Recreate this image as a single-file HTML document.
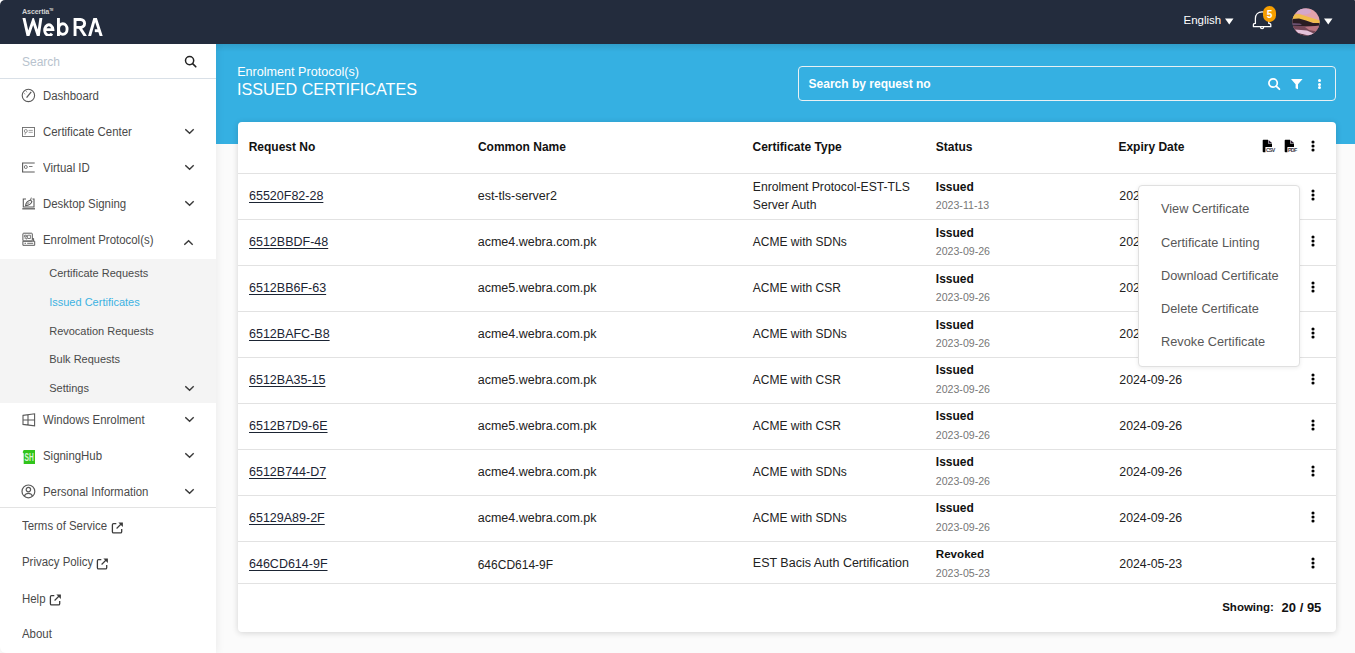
<!DOCTYPE html>
<html><head><meta charset="utf-8">
<style>
*{box-sizing:border-box;margin:0;padding:0}
html,body{width:1355px;height:653px;overflow:hidden;background:#fbfbfb;font-family:"Liberation Sans", sans-serif;color:#222}
.abs{position:absolute}
#hdr{position:absolute;left:0;top:0;width:1355px;height:44px;background:#232c3d;z-index:5;border-top-left-radius:5px;border-top-right-radius:1px}
#side{position:absolute;left:0;top:44px;width:216px;height:609px;background:#fff;box-shadow:1px 0 8px rgba(0,0,0,0.07);border-bottom-left-radius:6px}
#sidec{position:absolute;left:0;top:0;width:216px;height:653px;z-index:3}
#banner{position:absolute;left:216px;top:44px;width:1139px;height:100px;background:linear-gradient(rgba(0,0,0,0.1),rgba(0,0,0,0) 8px),#35b0e2}
#card{position:absolute;left:238px;top:122px;width:1098px;height:510px;background:#fff;border-radius:4px;box-shadow:0 1px 6px rgba(0,0,0,0.16)}
#main{position:absolute;left:0;top:0;width:1355px;height:653px}
.t{position:absolute;white-space:nowrap;line-height:1}
</style></head><body>
<div class="abs" style="left:0;top:0;width:10px;height:10px;background:#fff"></div>
<div id="banner"></div>
<div id="main">
<div class="t" style="left:237.2px;top:65.59px;font-size:12.6px;font-weight:400;color:#fff;">Enrolment Protocol(s)</div>
<div class="t" style="left:236.6px;top:80.93px;font-size:17px;font-weight:400;color:#fff;transform:scaleX(0.951);transform-origin:0 0">ISSUED CERTIFICATES</div>
<div class="abs" style="left:798px;top:66px;width:538px;height:35px;border:1px solid #e9f1f4;border-radius:4px"></div>
<div class="t" style="left:808.6px;top:78.28px;font-size:12px;font-weight:700;color:#fff;">Search by request no</div>
<svg class="abs" style="left:1267px;top:77px" width="15" height="14" viewBox="0 0 15 14"><circle cx="6.1" cy="6" r="4.2" fill="none" stroke="#fff" stroke-width="1.7"/><path d="M9.2 9.1L12.4 12.2" stroke="#fff" stroke-width="1.8" stroke-linecap="round"/></svg>
<svg class="abs" style="left:1290px;top:78px" width="14" height="12" viewBox="0 0 14 12"><path d="M1 1H12.6L8 6.3V11.3L5.6 10.2V6.3Z" fill="#fff"/></svg>
<div class="abs" style="left:1317.6px;top:79.0px;width:3px;height:3px;border-radius:50%;background:#fff"></div>
<div class="abs" style="left:1317.6px;top:82.5px;width:3px;height:3px;border-radius:50%;background:#fff"></div>
<div class="abs" style="left:1317.6px;top:85.8px;width:3px;height:3px;border-radius:50%;background:#fff"></div>

<div id="card"></div>
<div class="t" style="left:248.7px;top:140.58px;font-size:12px;font-weight:700;color:#111;">Request No</div>
<div class="t" style="left:477.9px;top:140.58px;font-size:12px;font-weight:700;color:#111;">Common Name</div>
<div class="t" style="left:752.5px;top:140.58px;font-size:12px;font-weight:700;color:#111;">Certificate Type</div>
<div class="t" style="left:935.8px;top:140.58px;font-size:12px;font-weight:700;color:#111;">Status</div>
<div class="t" style="left:1118.4px;top:140.58px;font-size:12px;font-weight:700;color:#111;">Expiry Date</div>
<svg class="abs" style="left:1262px;top:139px" width="16" height="15" viewBox="0 0 16 15"><path d="M0.7 1.5Q0.7 0.8 1.4 0.8H6V4.4H10V8H3.4V13.2H1.4Q0.7 13.2 0.7 12.5Z" fill="#000"/><path d="M6.5 1L10 4H6.5Z" fill="#2a1a30"/><text x="3.9" y="13.3" font-family="Liberation Sans" font-size="5.3" font-weight="bold" fill="#3a3a4a" textLength="9.3">CSV</text></svg>
<svg class="abs" style="left:1284px;top:139px" width="16" height="15" viewBox="0 0 16 15"><path d="M0.7 1.5Q0.7 0.8 1.4 0.8H6V4.4H10V8H3.4V13.2H1.4Q0.7 13.2 0.7 12.5Z" fill="#000"/><path d="M6.5 1L10 4H6.5Z" fill="#2a1a30"/><text x="3.9" y="13.3" font-family="Liberation Sans" font-size="5.3" font-weight="bold" fill="#3a3a4a" textLength="9.3">PDF</text></svg>
<svg class="abs" style="left:1308.6px;top:139.3px" width="8" height="14" viewBox="0 0 8 14"><circle cx="4" cy="3" r="1.55" fill="#000"/><circle cx="4" cy="7" r="1.55" fill="#000"/><circle cx="4" cy="11" r="1.55" fill="#000"/></svg>
<div class="abs" style="left:238px;top:173px;width:1098px;height:1px;background:#e2e2e2"></div>
<div class="t" style="left:249.0px;top:189.57px;font-size:12.5px;font-weight:400;color:#1b2433;text-decoration:underline;text-underline-offset:1.5px">65520F82-28</div>
<div class="t" style="left:477.7px;top:190.38px;font-size:12.5px;font-weight:400;color:#222;">est-tls-server2</div>
<div class="t" style="left:752.8px;top:181.42px;font-size:12.2px;font-weight:400;color:#222;">Enrolment Protocol-EST-TLS</div>
<div class="t" style="left:752.8px;top:199.12px;font-size:12.2px;font-weight:400;color:#222;">Server Auth</div>
<div class="t" style="left:935.8px;top:180.68px;font-size:12px;font-weight:700;color:#111;">Issued</div>
<div class="t" style="left:935.8px;top:199.91px;font-size:10.6px;font-weight:400;color:#777;">2023-11-13</div>
<div class="t" style="left:1119.3px;top:190.14px;font-size:12.3px;font-weight:400;color:#222;">2024-11-13</div>
<svg class="abs" style="left:1309px;top:187.9px" width="8" height="14" viewBox="0 0 8 14"><circle cx="4" cy="3" r="1.55" fill="#000"/><circle cx="4" cy="7" r="1.55" fill="#000"/><circle cx="4" cy="11" r="1.55" fill="#000"/></svg>
<div class="abs" style="left:238px;top:219px;width:1098px;height:1px;background:#e2e2e2"></div>
<div class="t" style="left:249.0px;top:235.57px;font-size:12.5px;font-weight:400;color:#1b2433;text-decoration:underline;text-underline-offset:1.5px">6512BBDF-48</div>
<div class="t" style="left:477.7px;top:236.38px;font-size:12.5px;font-weight:400;color:#222;">acme4.webra.com.pk</div>
<div class="t" style="left:752.8px;top:235.78px;font-size:12px;font-weight:400;color:#222;">ACME with SDNs</div>
<div class="t" style="left:935.8px;top:226.68px;font-size:12px;font-weight:700;color:#111;">Issued</div>
<div class="t" style="left:935.8px;top:245.91px;font-size:10.6px;font-weight:400;color:#777;">2023-09-26</div>
<div class="t" style="left:1119.3px;top:236.14px;font-size:12.3px;font-weight:400;color:#222;">2024-09-26</div>
<svg class="abs" style="left:1309px;top:233.9px" width="8" height="14" viewBox="0 0 8 14"><circle cx="4" cy="3" r="1.55" fill="#000"/><circle cx="4" cy="7" r="1.55" fill="#000"/><circle cx="4" cy="11" r="1.55" fill="#000"/></svg>
<div class="abs" style="left:238px;top:265px;width:1098px;height:1px;background:#e2e2e2"></div>
<div class="t" style="left:249.0px;top:281.57px;font-size:12.5px;font-weight:400;color:#1b2433;text-decoration:underline;text-underline-offset:1.5px">6512BB6F-63</div>
<div class="t" style="left:477.7px;top:282.38px;font-size:12.5px;font-weight:400;color:#222;">acme5.webra.com.pk</div>
<div class="t" style="left:752.8px;top:281.78px;font-size:12px;font-weight:400;color:#222;">ACME with CSR</div>
<div class="t" style="left:935.8px;top:272.68px;font-size:12px;font-weight:700;color:#111;">Issued</div>
<div class="t" style="left:935.8px;top:291.91px;font-size:10.6px;font-weight:400;color:#777;">2023-09-26</div>
<div class="t" style="left:1119.3px;top:282.14px;font-size:12.3px;font-weight:400;color:#222;">2024-09-26</div>
<svg class="abs" style="left:1309px;top:279.9px" width="8" height="14" viewBox="0 0 8 14"><circle cx="4" cy="3" r="1.55" fill="#000"/><circle cx="4" cy="7" r="1.55" fill="#000"/><circle cx="4" cy="11" r="1.55" fill="#000"/></svg>
<div class="abs" style="left:238px;top:311px;width:1098px;height:1px;background:#e2e2e2"></div>
<div class="t" style="left:249.0px;top:327.57px;font-size:12.5px;font-weight:400;color:#1b2433;text-decoration:underline;text-underline-offset:1.5px">6512BAFC-B8</div>
<div class="t" style="left:477.7px;top:328.38px;font-size:12.5px;font-weight:400;color:#222;">acme4.webra.com.pk</div>
<div class="t" style="left:752.8px;top:327.78px;font-size:12px;font-weight:400;color:#222;">ACME with SDNs</div>
<div class="t" style="left:935.8px;top:318.68px;font-size:12px;font-weight:700;color:#111;">Issued</div>
<div class="t" style="left:935.8px;top:337.91px;font-size:10.6px;font-weight:400;color:#777;">2023-09-26</div>
<div class="t" style="left:1119.3px;top:328.14px;font-size:12.3px;font-weight:400;color:#222;">2024-09-26</div>
<svg class="abs" style="left:1309px;top:325.9px" width="8" height="14" viewBox="0 0 8 14"><circle cx="4" cy="3" r="1.55" fill="#000"/><circle cx="4" cy="7" r="1.55" fill="#000"/><circle cx="4" cy="11" r="1.55" fill="#000"/></svg>
<div class="abs" style="left:238px;top:357px;width:1098px;height:1px;background:#e2e2e2"></div>
<div class="t" style="left:249.0px;top:373.57px;font-size:12.5px;font-weight:400;color:#1b2433;text-decoration:underline;text-underline-offset:1.5px">6512BA35-15</div>
<div class="t" style="left:477.7px;top:374.38px;font-size:12.5px;font-weight:400;color:#222;">acme5.webra.com.pk</div>
<div class="t" style="left:752.8px;top:373.78px;font-size:12px;font-weight:400;color:#222;">ACME with CSR</div>
<div class="t" style="left:935.8px;top:363.68px;font-size:12px;font-weight:700;color:#111;">Issued</div>
<div class="t" style="left:935.8px;top:383.91px;font-size:10.6px;font-weight:400;color:#777;">2023-09-26</div>
<div class="t" style="left:1119.3px;top:374.14px;font-size:12.3px;font-weight:400;color:#222;">2024-09-26</div>
<svg class="abs" style="left:1309px;top:371.9px" width="8" height="14" viewBox="0 0 8 14"><circle cx="4" cy="3" r="1.55" fill="#000"/><circle cx="4" cy="7" r="1.55" fill="#000"/><circle cx="4" cy="11" r="1.55" fill="#000"/></svg>
<div class="abs" style="left:238px;top:403px;width:1098px;height:1px;background:#e2e2e2"></div>
<div class="t" style="left:249.0px;top:419.57px;font-size:12.5px;font-weight:400;color:#1b2433;text-decoration:underline;text-underline-offset:1.5px">6512B7D9-6E</div>
<div class="t" style="left:477.7px;top:420.38px;font-size:12.5px;font-weight:400;color:#222;">acme5.webra.com.pk</div>
<div class="t" style="left:752.8px;top:419.78px;font-size:12px;font-weight:400;color:#222;">ACME with CSR</div>
<div class="t" style="left:935.8px;top:409.68px;font-size:12px;font-weight:700;color:#111;">Issued</div>
<div class="t" style="left:935.8px;top:429.91px;font-size:10.6px;font-weight:400;color:#777;">2023-09-26</div>
<div class="t" style="left:1119.3px;top:420.14px;font-size:12.3px;font-weight:400;color:#222;">2024-09-26</div>
<svg class="abs" style="left:1309px;top:417.9px" width="8" height="14" viewBox="0 0 8 14"><circle cx="4" cy="3" r="1.55" fill="#000"/><circle cx="4" cy="7" r="1.55" fill="#000"/><circle cx="4" cy="11" r="1.55" fill="#000"/></svg>
<div class="abs" style="left:238px;top:449px;width:1098px;height:1px;background:#e2e2e2"></div>
<div class="t" style="left:249.0px;top:465.57px;font-size:12.5px;font-weight:400;color:#1b2433;text-decoration:underline;text-underline-offset:1.5px">6512B744-D7</div>
<div class="t" style="left:477.7px;top:466.38px;font-size:12.5px;font-weight:400;color:#222;">acme4.webra.com.pk</div>
<div class="t" style="left:752.8px;top:465.78px;font-size:12px;font-weight:400;color:#222;">ACME with SDNs</div>
<div class="t" style="left:935.8px;top:455.68px;font-size:12px;font-weight:700;color:#111;">Issued</div>
<div class="t" style="left:935.8px;top:475.91px;font-size:10.6px;font-weight:400;color:#777;">2023-09-26</div>
<div class="t" style="left:1119.3px;top:466.14px;font-size:12.3px;font-weight:400;color:#222;">2024-09-26</div>
<svg class="abs" style="left:1309px;top:463.9px" width="8" height="14" viewBox="0 0 8 14"><circle cx="4" cy="3" r="1.55" fill="#000"/><circle cx="4" cy="7" r="1.55" fill="#000"/><circle cx="4" cy="11" r="1.55" fill="#000"/></svg>
<div class="abs" style="left:238px;top:495px;width:1098px;height:1px;background:#e2e2e2"></div>
<div class="t" style="left:249.0px;top:511.58px;font-size:12.5px;font-weight:400;color:#1b2433;text-decoration:underline;text-underline-offset:1.5px">65129A89-2F</div>
<div class="t" style="left:477.7px;top:512.38px;font-size:12.5px;font-weight:400;color:#222;">acme4.webra.com.pk</div>
<div class="t" style="left:752.8px;top:511.78px;font-size:12px;font-weight:400;color:#222;">ACME with SDNs</div>
<div class="t" style="left:935.8px;top:501.68px;font-size:12px;font-weight:700;color:#111;">Issued</div>
<div class="t" style="left:935.8px;top:521.91px;font-size:10.6px;font-weight:400;color:#777;">2023-09-26</div>
<div class="t" style="left:1119.3px;top:512.14px;font-size:12.3px;font-weight:400;color:#222;">2024-09-26</div>
<svg class="abs" style="left:1309px;top:509.9px" width="8" height="14" viewBox="0 0 8 14"><circle cx="4" cy="3" r="1.55" fill="#000"/><circle cx="4" cy="7" r="1.55" fill="#000"/><circle cx="4" cy="11" r="1.55" fill="#000"/></svg>
<div class="abs" style="left:238px;top:541px;width:1098px;height:1px;background:#e2e2e2"></div>
<div class="t" style="left:249.0px;top:557.58px;font-size:12.5px;font-weight:400;color:#1b2433;text-decoration:underline;text-underline-offset:1.5px">646CD614-9F</div>
<div class="t" style="left:477.7px;top:558.78px;font-size:12px;font-weight:400;color:#222;">646CD614-9F</div>
<div class="t" style="left:752.8px;top:557.38px;font-size:12.5px;font-weight:400;color:#222;">EST Bacis Auth Certification</div>
<div class="t" style="left:935.8px;top:548.00px;font-size:11.6px;font-weight:700;color:#111;">Revoked</div>
<div class="t" style="left:935.8px;top:567.91px;font-size:10.6px;font-weight:400;color:#777;">2023-05-23</div>
<div class="t" style="left:1119.3px;top:558.14px;font-size:12.3px;font-weight:400;color:#222;">2024-05-23</div>
<svg class="abs" style="left:1309px;top:555.9px" width="8" height="14" viewBox="0 0 8 14"><circle cx="4" cy="3" r="1.55" fill="#000"/><circle cx="4" cy="7" r="1.55" fill="#000"/><circle cx="4" cy="11" r="1.55" fill="#000"/></svg>
<div class="abs" style="left:238px;top:583px;width:1098px;height:1px;background:#e2e2e2"></div>
<div class="t" style="left:1222.2px;top:602.38px;font-size:11.5px;font-weight:700;color:#111;">Showing:</div>
<div class="t" style="left:1281.6px;top:601.17px;font-size:13px;font-weight:700;color:#111;">20 / 95</div>
<div class="abs" style="left:1138px;top:185px;width:161.5px;height:182px;background:#fff;border:1px solid #e0e0e0;border-radius:4px;box-shadow:0 1px 4px rgba(0,0,0,0.08)"></div>
<div class="t" style="left:1161.0px;top:202.97px;font-size:12.75px;font-weight:400;color:#585858;">View Certificate</div>
<div class="t" style="left:1161.0px;top:236.97px;font-size:12.75px;font-weight:400;color:#585858;">Certificate Linting</div>
<div class="t" style="left:1161.0px;top:270.17px;font-size:12.75px;font-weight:400;color:#585858;">Download Certificate</div>
<div class="t" style="left:1161.0px;top:303.07px;font-size:12.75px;font-weight:400;color:#585858;">Delete Certificate</div>
<div class="t" style="left:1161.0px;top:335.57px;font-size:12.75px;font-weight:400;color:#585858;">Revoke Certificate</div>

</div>
<div id="hdr">
<div class="t" style="left:22.0px;top:7.77px;font-size:7.2px;font-weight:700;color:#d0d0d0;letter-spacing:-0.15px">Ascertia<span style="font-size:3px;vertical-align:3px">TM</span></div>
<svg class="abs" style="left:0;top:0" width="120" height="44" viewBox="0 0 120 44"><defs><clipPath id="lc"><rect x="0" y="17.9" width="120" height="18"/></clipPath></defs><g clip-path="url(#lc)" fill="none" stroke="#fff" stroke-width="2.9"><path d="M23.5 16L28 35.8L33.2 20.6L38.3 35.8L41.2 16" stroke-linejoin="miter" stroke-miterlimit="10"/><path d="M44.8 29.6H52.9A4.1 5.3 0 1 0 51.9 33.6"/><path d="M58.45 16V36"/><ellipse cx="62.85" cy="29.05" rx="4.25" ry="5.3"/><path d="M75.05 16V36"/><path d="M75.05 19.5H80.5A4.1 3.95 0 0 1 80.5 27.4H75.05"/><path d="M79.6 27.2L85.6 36.5"/><path d="M89.3 37L95.1 17.2L101.5 37" stroke-linejoin="miter"/><path d="M94.8 30.7H99.4"/></g></svg>
<div class="t" style="left:1183.5px;top:15.18px;font-size:11.5px;font-weight:400;color:#fff;">English</div>
<svg class="abs" style="left:1225px;top:18px" width="9" height="7"><path d="M0 0.5H8.5L4.25 6.5Z" fill="#fff"/></svg>
<svg class="abs" style="left:1252px;top:10px" width="21" height="21" viewBox="0 0 21 21"><path d="M1.4 16.7H18.8V14.7Q18.8 13.9 18 13.7L16.8 13.4V8.6C16.8 4.6 14.1 1.9 10.1 1.9S3.4 4.6 3.4 8.6V13.4L2.2 13.7Q1.4 13.9 1.4 14.7Z" fill="none" stroke="#fff" stroke-width="1.25" stroke-linejoin="round"/><path d="M8.5 17.1a1.6 1.6 0 0 0 3.2 0" fill="none" stroke="#fff" stroke-width="1.2"/></svg>
<div class="abs" style="left:1263px;top:6px;width:13px;height:16px;border-radius:6.5px;background:#f69e00;color:#fff;font-size:10px;font-weight:bold;text-align:center;line-height:17px">5</div>
<svg class="abs" style="left:1291.6px;top:7.5px" width="28" height="28" viewBox="0 0 28 28"><defs><clipPath id="av"><circle cx="14" cy="13.8" r="13.6"/></clipPath></defs><g clip-path="url(#av)"><rect width="28" height="28" fill="#e2a2ac"/><ellipse cx="12" cy="3.5" rx="7" ry="3" fill="#d4a8cc"/><path d="M0 6.5L7 6L28 12.5V16L10 12.5L0 12Z" fill="#f0bc4c"/><path d="M0 11L7 10.5L14 12.5L21 15L28 15V18.5H0Z" fill="#2a1c22"/><path d="M0 18H28V28H0Z" fill="#754858"/><path d="M13 19L28 17.5V24L17 22Z" fill="#b87480"/><path d="M0 15L8 15.5L10 17L0 17.5Z" fill="#6a5070"/><path d="M3 21.5L15 22.5L24 26.5L21 28.5L6 25Z" fill="#e4c2da"/><path d="M0 24L9 26L17 28.5L0 28.5Z" fill="#3c2630"/></g></svg>
<svg class="abs" style="left:1324px;top:18px" width="9" height="7"><path d="M0 0.5H8.5L4.25 6.5Z" fill="#fff"/></svg>
</div>
<div id="side">
</div>

<div id="sidec">
<div class="t" style="left:22.0px;top:56.28px;font-size:12px;font-weight:400;color:#b8c3ce;">Search</div>
<svg class="abs" style="left:184px;top:55px" width="13" height="13" viewBox="0 0 13 13"><circle cx="5.6" cy="5.6" r="4.1" fill="none" stroke="#222" stroke-width="1.5"/><path d="M8.6 8.6L11.8 11.8" stroke="#222" stroke-width="1.6" stroke-linecap="round"/></svg>
<div class="abs" style="left:0;top:78px;width:216px;height:1px;background:#d9e0e7"></div>
<div class="t" style="left:42.6px;top:90.08px;font-size:12px;font-weight:400;color:#4a4a4a;transform:scaleX(0.952);transform-origin:0 0">Dashboard</div>
<div class="t" style="left:42.6px;top:125.98px;font-size:12px;font-weight:400;color:#4a4a4a;transform:scaleX(0.952);transform-origin:0 0">Certificate Center</div>
<div class="t" style="left:42.6px;top:162.18px;font-size:12px;font-weight:400;color:#4a4a4a;transform:scaleX(0.952);transform-origin:0 0">Virtual ID</div>
<div class="t" style="left:42.6px;top:198.18px;font-size:12px;font-weight:400;color:#4a4a4a;transform:scaleX(0.952);transform-origin:0 0">Desktop Signing</div>
<div class="t" style="left:42.6px;top:233.68px;font-size:12px;font-weight:400;color:#4a4a4a;transform:scaleX(0.952);transform-origin:0 0">Enrolment Protocol(s)</div>
<svg class="abs" style="left:185px;top:127.5px" width="10" height="7" viewBox="0 0 10 7"><path d="M0.3 1.2L4.6 5.3L8.7 1.2" fill="none" stroke="#3a3a3a" stroke-width="1.4"/></svg>
<svg class="abs" style="left:185px;top:163.5px" width="10" height="7" viewBox="0 0 10 7"><path d="M0.3 1.2L4.6 5.3L8.7 1.2" fill="none" stroke="#3a3a3a" stroke-width="1.4"/></svg>
<svg class="abs" style="left:185px;top:199.5px" width="10" height="7" viewBox="0 0 10 7"><path d="M0.3 1.2L4.6 5.3L8.7 1.2" fill="none" stroke="#3a3a3a" stroke-width="1.4"/></svg>
<svg class="abs" style="left:184px;top:238.6px" width="10" height="7" viewBox="0 0 10 7"><path d="M0.3 5.8L4.6 1.7L8.7 5.8" fill="none" stroke="#3a3a3a" stroke-width="1.4"/></svg>
<div class="abs" style="left:0;top:259px;width:216px;height:144px;background:#f4f4f4"></div>
<div class="t" style="left:49.2px;top:268.09px;font-size:11px;font-weight:400;color:#4a4a4a;">Certificate Requests</div>
<div class="t" style="left:49.2px;top:296.99px;font-size:11px;font-weight:400;color:#3cb2e2;">Issued Certificates</div>
<div class="t" style="left:49.2px;top:326.09px;font-size:11px;font-weight:400;color:#4a4a4a;">Revocation Requests</div>
<div class="t" style="left:49.2px;top:354.29px;font-size:11px;font-weight:400;color:#4a4a4a;">Bulk Requests</div>
<div class="t" style="left:49.2px;top:383.29px;font-size:11px;font-weight:400;color:#4a4a4a;">Settings</div>
<svg class="abs" style="left:185px;top:384.5px" width="10" height="7" viewBox="0 0 10 7"><path d="M0.3 1.2L4.6 5.3L8.7 1.2" fill="none" stroke="#3a3a3a" stroke-width="1.4"/></svg>
<div class="t" style="left:42.9px;top:414.18px;font-size:12px;font-weight:400;color:#4a4a4a;transform:scaleX(0.952);transform-origin:0 0">Windows Enrolment</div>
<div class="t" style="left:42.9px;top:450.08px;font-size:12px;font-weight:400;color:#4a4a4a;transform:scaleX(0.952);transform-origin:0 0">SigningHub</div>
<div class="t" style="left:42.9px;top:486.28px;font-size:12px;font-weight:400;color:#4a4a4a;transform:scaleX(0.952);transform-origin:0 0">Personal Information</div>
<svg class="abs" style="left:185px;top:415.5px" width="10" height="7" viewBox="0 0 10 7"><path d="M0.3 1.2L4.6 5.3L8.7 1.2" fill="none" stroke="#3a3a3a" stroke-width="1.4"/></svg>
<svg class="abs" style="left:185px;top:451.5px" width="10" height="7" viewBox="0 0 10 7"><path d="M0.3 1.2L4.6 5.3L8.7 1.2" fill="none" stroke="#3a3a3a" stroke-width="1.4"/></svg>
<svg class="abs" style="left:185px;top:487.5px" width="10" height="7" viewBox="0 0 10 7"><path d="M0.3 1.2L4.6 5.3L8.7 1.2" fill="none" stroke="#3a3a3a" stroke-width="1.4"/></svg>
<div class="abs" style="left:0;top:507px;width:216px;height:1px;background:#e3e3e3"></div>
<div class="t" style="left:22.0px;top:520.38px;font-size:12px;font-weight:400;color:#4a4a4a;transform:scaleX(0.952);transform-origin:0 0">Terms of Service</div>
<svg class="abs" style="left:111px;top:521.7px" width="13" height="12" viewBox="0 0 13 12"><path d="M5.3 1.6H2.6Q1.4 1.6 1.4 2.8V9.7Q1.4 10.9 2.6 10.9H9.5Q10.7 10.9 10.7 9.7V6.9" fill="none" stroke="#3a3a3a" stroke-width="1.3"/><path d="M5.6 6.5L10.6 1.5" stroke="#3a3a3a" stroke-width="1.2"/><path d="M7.4 0.5H11.9V5Z" fill="#3a3a3a"/></svg>
<div class="t" style="left:22.0px;top:556.48px;font-size:12px;font-weight:400;color:#4a4a4a;transform:scaleX(0.952);transform-origin:0 0">Privacy Policy</div>
<svg class="abs" style="left:96px;top:557.8px" width="13" height="12" viewBox="0 0 13 12"><path d="M5.3 1.6H2.6Q1.4 1.6 1.4 2.8V9.7Q1.4 10.9 2.6 10.9H9.5Q10.7 10.9 10.7 9.7V6.9" fill="none" stroke="#3a3a3a" stroke-width="1.3"/><path d="M5.6 6.5L10.6 1.5" stroke="#3a3a3a" stroke-width="1.2"/><path d="M7.4 0.5H11.9V5Z" fill="#3a3a3a"/></svg>
<div class="t" style="left:22.0px;top:592.58px;font-size:12px;font-weight:400;color:#4a4a4a;transform:scaleX(0.952);transform-origin:0 0">Help</div>
<svg class="abs" style="left:49px;top:593.9px" width="13" height="12" viewBox="0 0 13 12"><path d="M5.3 1.6H2.6Q1.4 1.6 1.4 2.8V9.7Q1.4 10.9 2.6 10.9H9.5Q10.7 10.9 10.7 9.7V6.9" fill="none" stroke="#3a3a3a" stroke-width="1.3"/><path d="M5.6 6.5L10.6 1.5" stroke="#3a3a3a" stroke-width="1.2"/><path d="M7.4 0.5H11.9V5Z" fill="#3a3a3a"/></svg>
<div class="t" style="left:22.0px;top:628.28px;font-size:12px;font-weight:400;color:#4a4a4a;transform:scaleX(0.952);transform-origin:0 0">About</div>
<svg class="abs" style="left:21px;top:88px" width="15" height="15" viewBox="0 0 15 15"><circle cx="7.4" cy="7.4" r="6.2" fill="none" stroke="#5a5a5a" stroke-width="1.1"/><path d="M5.6 9.6L10.2 3.8" stroke="#5a5a5a" stroke-width="1.3"/><path d="M3.4 5.6l0.8 0.5M5.4 3.4l0.5 0.8" stroke="#5a5a5a" stroke-width="0.9"/></svg>
<svg class="abs" style="left:22px;top:127px" width="13" height="10" viewBox="0 0 13 10"><rect x="0.5" y="0.5" width="12" height="9" fill="none" stroke="#6a6a6a" stroke-width="0.9"/><circle cx="3.8" cy="4" r="1.5" fill="none" stroke="#777" stroke-width="0.8"/><path d="M3.4 5.5L3 7.8M6.6 3.4H10.8M6.6 5.3H10.8" stroke="#888" stroke-width="0.8"/></svg>
<svg class="abs" style="left:22px;top:162px" width="13" height="11" viewBox="0 0 13 11"><path d="M0 1H12.7M0 10H12.7M0.6 1V10" fill="none" stroke="#5a5a5a" stroke-width="1.1"/><circle cx="3.8" cy="5" r="1.5" fill="none" stroke="#5a5a5a" stroke-width="0.8"/><path d="M7 4.5H10.5" stroke="#5a5a5a" stroke-width="0.8"/></svg>
<svg class="abs" style="left:22px;top:197px" width="14" height="13" viewBox="0 0 14 13"><path d="M4 2H1.3V10H12V2H10.5" fill="none" stroke="#5a5a5a" stroke-width="1.1"/><path d="M3.6 8.6C3.8 6.2 5.8 4 8.6 3.1L9.9 4.6C9.2 6.6 7 8.3 3.6 8.6Z" fill="none" stroke="#5a5a5a" stroke-width="1.1"/><path d="M5.2 7L7.4 5.4M8.6 3.1L9.3 0.6" stroke="#5a5a5a" stroke-width="0.9"/><path d="M0.3 11.8H13" stroke="#5a5a5a" stroke-width="1.3"/></svg>
<svg class="abs" style="left:22px;top:232px" width="14" height="15" viewBox="0 0 14 15"><rect x="0.9" y="1.2" width="9.4" height="7.8" rx="0.8" fill="none" stroke="#5a5a5a" stroke-width="1"/><path d="M2.6 3.2H4.4V5H2.6ZM5.6 3.2H8.4V6.5H5.6Z M2.6 6.2H4.4V7.5" fill="none" stroke="#5a5a5a" stroke-width="0.8"/><path d="M10.3 6.5H11.6V9.2M0.9 9.2H12.7V13.3H0.9Z" fill="none" stroke="#5a5a5a" stroke-width="1"/><path d="M2.5 11.3H4M5.2 11.3H11.2" stroke="#5a5a5a" stroke-width="0.9"/></svg>
<svg class="abs" style="left:21.5px;top:412.5px" width="14" height="14" viewBox="0 0 14 14"><path d="M1 2.4L12.6 0.8V12.8L1 11.4Z M1 7H12.6 M6 1.7V12.2" fill="none" stroke="#5a5a5a" stroke-width="1.1"/></svg>
<svg class="abs" style="left:21px;top:449px" width="16" height="16" viewBox="0 0 16 16"><path d="M2.7 1H14V15H2.7V4.5L1.6 3.2Z" fill="#31c41c"/><text x="3.6" y="12.2" font-family="Liberation Sans" font-size="10" font-weight="bold" fill="rgba(255,255,255,0.82)" textLength="9.2" lengthAdjust="spacingAndGlyphs">SH</text></svg>
<svg class="abs" style="left:21px;top:483.5px" width="15" height="15" viewBox="0 0 15 15"><circle cx="7.4" cy="7.4" r="6.4" fill="none" stroke="#5a5a5a" stroke-width="1.2"/><circle cx="7.4" cy="5.6" r="2.2" fill="none" stroke="#5a5a5a" stroke-width="1.2"/><path d="M3.2 12.1C4.2 10.2 5.6 9.4 7.4 9.4S10.6 10.2 11.6 12.1" fill="none" stroke="#5a5a5a" stroke-width="1.2"/></svg>

</div>
</body></html>
